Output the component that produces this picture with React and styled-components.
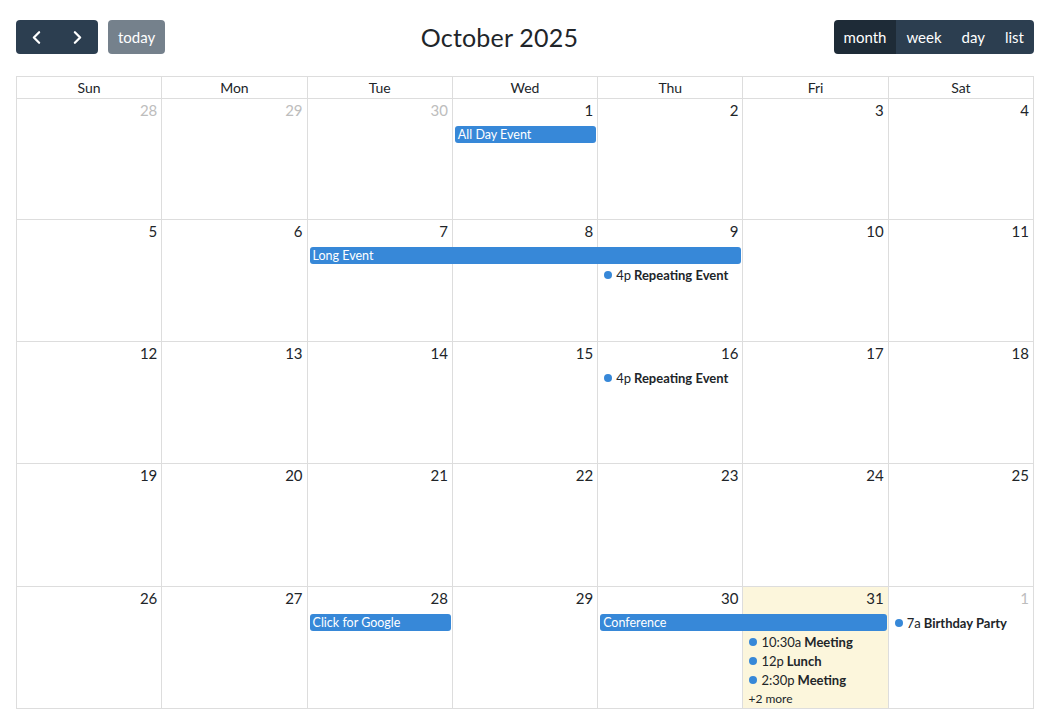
import React from 'react'
import styled, { createGlobalStyle } from 'styled-components'
import { ChevronLeft, ChevronRight } from 'lucide-react'

const GlobalStyle = createGlobalStyle`
  html { overflow-y: scroll; }
  html::-webkit-scrollbar { width: 15px; background: #f1f1f1; }
  html::-webkit-scrollbar-thumb { background: #f1f1f1; }
  html, body { margin: 0; padding: 0; background: #fff; }
  body {
    font-family: Lato, "Open Sans", "Liberation Sans", sans-serif;
    color: #212529;
  }
`;

const Page = styled.div`
  padding: 20px 0 24px 16px;
`;

const Calendar = styled.div`
  width: 1018px;
`;

const Toolbar = styled.div`
  display: flex;
  align-items: center;
  justify-content: space-between;
  height: 34px;
  margin-bottom: 22px;
`;

const Group = styled.div`
  display: flex;
  align-items: center;
`;

const ButtonGroup = styled.div`
  display: flex;
  border-radius: 4px;
  overflow: hidden;
`;

const Button = styled.button`
  height: 34px;
  border: 0;
  margin: 0;
  padding: ${p => (p.$icon ? '0 10px' : '0 10px')};
  display: flex;
  align-items: center;
  justify-content: center;
  background: ${p => (p.$active ? '#1e2b37' : '#2c3e50')};
  color: #fff;
  font-family: inherit;
  font-size: 15px;
  cursor: pointer;
`;

const TodayButton = styled(Button)`
  margin-left: 10px;
  border-radius: 4px;
  opacity: 0.65;
  padding: 0 10px;
`;

const Title = styled.h2`
  margin: 0;
  font-size: 25px;
  font-weight: 400;
  color: #212529;
  letter-spacing: 0.2px;
`;

const Table = styled.div`
  border-left: 1px solid #ddd;
  border-top: 1px solid #ddd;
`;

const HeaderRow = styled.div`
  display: grid;
  grid-template-columns: repeat(7, 1fr);
`;

const HeaderCell = styled.div`
  height: 21px;
  line-height: 21px;
  text-align: center;
  font-size: 14px;
  border-right: 1px solid #ddd;
  border-bottom: 1px solid #ddd;
`;

const Week = styled.div`
  display: grid;
  grid-template-columns: repeat(7, 1fr);
  grid-template-rows: 26px repeat(4, 19px) 1fr;
  height: ${p => p.$height}px;
`;

const DayCell = styled.div`
  grid-row: 1 / -1;
  grid-column: ${p => p.$col};
  border-right: 1px solid #ddd;
  border-bottom: 1px solid #ddd;
  background: ${p => (p.$today ? '#fcf6dc' : 'transparent')};
`;

const DayNumber = styled.div`
  grid-row: 1;
  grid-column: ${p => p.$col};
  text-align: right;
  padding: 2px 5px 0 0;
  font-size: 15px;
  color: ${p => (p.$other ? '#bdbdbd' : '#212529')};
  z-index: 1;
`;

const Bar = styled.div`
  grid-row: ${p => p.$slot + 1};
  grid-column: ${p => p.$col} / span ${p => p.$span};
  margin: 1px 2px 1px 2px;
  height: 17px;
  line-height: 17px;
  background: #3788d8;
  border-radius: 3px;
  color: #fff;
  font-size: 12.5px;
  padding-left: 3px;
  white-space: nowrap;
  overflow: hidden;
  z-index: 1;
`;

const DotEvent = styled.div`
  grid-row: ${p => p.$slot + 1};
  grid-column: ${p => p.$col};
  display: flex;
  align-items: center;
  padding-left: 6px;
  font-size: 13px;
  white-space: nowrap;
  overflow: hidden;
  z-index: 1;
`;

const Dot = styled.span`
  width: 8px;
  height: 8px;
  border-radius: 50%;
  background: #3788d8;
  margin-right: 4px;
  flex: none;
`;

const Time = styled.span`
  margin-right: 3px;
`;

const EventTitle = styled.span`
  font-weight: 700;
`;

const More = styled.div`
  grid-row: ${p => p.$slot + 1};
  grid-column: ${p => p.$col};
  padding-left: 5px;
  font-size: 12px;
  line-height: 19px;
  z-index: 1;
`;

const dayNames = ['Sun', 'Mon', 'Tue', 'Wed', 'Thu', 'Fri', 'Sat']

const weeks = [
  {
    height: 121,
    days: [28, 29, 30, 1, 2, 3, 4],
    other: [0, 1, 2],
    events: [{ kind: 'bar', col: 4, span: 1, slot: 1, title: 'All Day Event' }],
  },
  {
    height: 122,
    days: [5, 6, 7, 8, 9, 10, 11],
    other: [],
    events: [
      { kind: 'bar', col: 3, span: 3, slot: 1, title: 'Long Event' },
      { kind: 'dot', col: 5, slot: 2, time: '4p', title: 'Repeating Event' },
    ],
  },
  {
    height: 122,
    days: [12, 13, 14, 15, 16, 17, 18],
    other: [],
    events: [{ kind: 'dot', col: 5, slot: 1, time: '4p', title: 'Repeating Event' }],
  },
  {
    height: 123,
    days: [19, 20, 21, 22, 23, 24, 25],
    other: [],
    events: [],
  },
  {
    height: 122,
    days: [26, 27, 28, 29, 30, 31, 1],
    other: [6],
    today: 5,
    events: [
      { kind: 'bar', col: 3, span: 1, slot: 1, title: 'Click for Google' },
      { kind: 'bar', col: 5, span: 2, slot: 1, title: 'Conference' },
      { kind: 'dot', col: 6, slot: 2, time: '10:30a', title: 'Meeting' },
      { kind: 'dot', col: 6, slot: 3, time: '12p', title: 'Lunch' },
      { kind: 'dot', col: 6, slot: 4, time: '2:30p', title: 'Meeting' },
      { kind: 'more', col: 6, slot: 5, title: '+2 more' },
      { kind: 'dot', col: 7, slot: 1, time: '7a', title: 'Birthday Party' },
    ],
  },
]

function renderEvent(ev, i) {
  if (ev.kind === 'bar') {
    return (
      <Bar key={i} $col={ev.col} $span={ev.span} $slot={ev.slot}>
        {ev.title}
      </Bar>
    )
  }
  if (ev.kind === 'more') {
    return (
      <More key={i} $col={ev.col} $slot={ev.slot}>
        {ev.title}
      </More>
    )
  }
  return (
    <DotEvent key={i} $col={ev.col} $slot={ev.slot}>
      <Dot />
      <Time>{ev.time}</Time>
      <EventTitle>{ev.title}</EventTitle>
    </DotEvent>
  )
}

export default function App() {
  return (
    <Page>
      <GlobalStyle />
      <Calendar>
        <Toolbar>
          <Group>
            <ButtonGroup>
              <Button $icon aria-label="prev">
                <ChevronLeft size={21} strokeWidth={2.6} />
              </Button>
              <Button $icon aria-label="next">
                <ChevronRight size={21} strokeWidth={2.6} />
              </Button>
            </ButtonGroup>
            <TodayButton>today</TodayButton>
          </Group>
          <Title>October 2025</Title>
          <ButtonGroup>
            <Button $active>month</Button>
            <Button>week</Button>
            <Button>day</Button>
            <Button>list</Button>
          </ButtonGroup>
        </Toolbar>
        <Table>
          <HeaderRow>
            {dayNames.map(d => (
              <HeaderCell key={d}>{d}</HeaderCell>
            ))}
          </HeaderRow>
          {weeks.map((w, wi) => (
            <Week key={wi} $height={w.height}>
              {w.days.map((d, i) => (
                <DayCell key={'c' + i} $col={i + 1} $today={w.today === i} />
              ))}
              {w.days.map((d, i) => (
                <DayNumber key={'n' + i} $col={i + 1} $other={w.other.includes(i)}>
                  {d}
                </DayNumber>
              ))}
              {w.events.map(renderEvent)}
            </Week>
          ))}
        </Table>
      </Calendar>
    </Page>
  )
}
